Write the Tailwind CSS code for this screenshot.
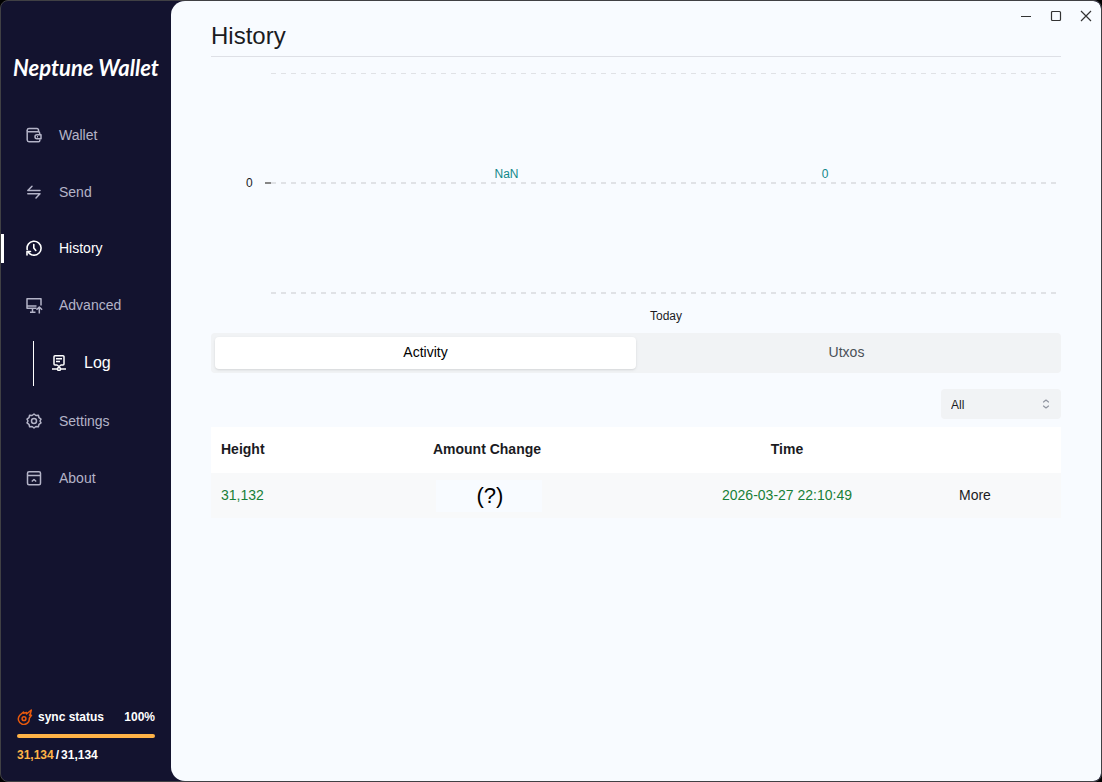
<!DOCTYPE html>
<html lang="en">

<head>
    <meta charset="UTF-8">
    <meta name="viewport" content="width=device-width, initial-scale=1.0">
    <title>Neptune Wallet</title>
    <script src="https://cdn.jsdelivr.net/npm/@tailwindcss/browser@4"></script>
</head>

<body class="bg-black font-['Liberation_Sans',Arial,sans-serif] text-sm text-[#1b1b1f]">
    <div class="flex min-h-screen overflow-hidden rounded-lg border border-[#404044] bg-[#13132f]">
        <!-- Sidebar -->
        <aside class="flex w-[170px] shrink-0 flex-col">
            <div class="h-[105px] pt-[51px] text-center font-['Lato','Open_Sans',sans-serif] text-[22px] leading-8 font-bold whitespace-nowrap text-white italic">Neptune Wallet</div>
            <nav class="flex flex-col text-[#b4b4c8]">
                <a href="#wallet" class="flex h-[57px] items-center gap-[17px] pl-[25px]">
                    <svg class="size-4" viewBox="0 0 16 16" fill="none" stroke="currentColor" stroke-width="1.500" stroke-linejoin="round">
                        <path d="M12.500 5V3a1.500 1.500 0 0 0-1.500-1.500H3A1.800 1.800 0 0 0 1.200 3v10A1.800 1.800 0 0 0 3 14.700h9.500a1.300 1.300 0 0 0 1.300-1.300V12.500" />
                        <path d="M1.200 3.500a1.500 1.500 0 0 0 1.500 1.300h9.500a1.500 1.500 0 0 1 1.500 1.500v1" />
                        <path d="M11 7.800h4v4h-4a2 2 0 0 1 0-4z" />
                        <path d="M11 9.800h1" />
                    </svg>
                    Wallet
                </a>
                <a href="#send" class="flex h-[57px] items-center gap-[17px] pl-[25px]">
                    <svg class="size-4" viewBox="0 0 16 16" fill="none" stroke="currentColor" stroke-width="1.500" stroke-linecap="round" stroke-linejoin="round">
                        <path d="M14 6.500H1.800L6 2.300" />
                        <path d="M1.800 9.800H14L10 14" />
                    </svg>
                    Send
                </a>
                <a href="#history" aria-current="page" class="flex h-14 items-center text-white">
                    <span class="h-[29px] w-[3px] bg-white"></span>
                    <svg class="mr-[17px] ml-[22px] size-4" viewBox="0 0 16 16" fill="none" stroke="currentColor" stroke-width="1.600" stroke-linecap="round" stroke-linejoin="round">
                        <path d="M1.200 9.500A7 7 0 1 1 8 15.200" />
                        <path d="M8 15.200a7 7 0 0 1-6-3.500" />
                        <path d="M1 15v-3.500h3.500" />
                        <path d="M7.800 4.500V8l2 2.500" />
                    </svg>
                    History
                </a>
                <a href="#advanced" class="flex h-[57px] items-center gap-[17px] pl-[25px]">
                    <svg class="size-4 overflow-visible" viewBox="0 0 16 16" fill="none" stroke="currentColor" stroke-width="1.500" stroke-linejoin="round">
                        <path d="M15 8.500V1.800H1v9.500h9.500" />
                        <path d="M1 9h9.500" />
                        <path d="M6.500 11.500V15M4 15.200h5.500" />
                        <path d="M13.300 16.500v-6M10.500 12.800l2.800-2.800 2.800 2.800" />
                    </svg>
                    Advanced
                </a>
                <div class="flex h-[60px] items-center pl-8">
                    <a href="#log" class="flex h-[45px] items-center gap-[17px] border-l border-white pl-[17px] text-base text-white">
                        <svg class="size-4" viewBox="0 0 16 16" fill="none" stroke="currentColor" stroke-width="1.500" stroke-linejoin="round">
                            <path d="M4 .800h8a1 1 0 0 1 1 1V9a1 1 0 0 1-1 1h-2L8 11.500 6 10H4a1 1 0 0 1-1-1V1.800a1 1 0 0 1 1-1z" />
                            <path d="M5 3.800h6M5 6.500h4" />
                            <circle cx="8" cy="14" r="1.500" />
                            <path d="M1 14h5.500M9.500 14H15" />
                        </svg>
                        Log
                    </a>
                </div>
                <a href="#settings" class="flex h-14 items-center gap-[17px] pl-[25px]">
                    <svg class="size-4" viewBox="0 0 16 16" fill="none" stroke="currentColor" stroke-width="1.500" stroke-linejoin="round">
                        <path d="M8 1l1.900 1.500 2.500-.300.600 2.500L15 6.200 14 8l1 1.900-2 1.400-.600 2.500-2.500-.300L8 15l-1.900-1.500-2.500.300L3 11.300 1 9.900 2 8 1 6.200l2-1.500.600-2.500 2.500.300z" />
                        <circle cx="8" cy="8" r="2.500" />
                    </svg>
                    Settings
                </a>
                <a href="#about" class="flex h-[57px] items-center gap-[17px] pl-[25px]">
                    <svg class="size-4" viewBox="0 0 16 16" fill="none" stroke="currentColor" stroke-width="1.500" stroke-linejoin="round">
                        <rect x="1.500" y="1.800" width="13" height="13" rx="1.500" />
                        <path d="M1.500 5.500h13" />
                        <path d="M5.800 11.500L8 9.500l2.200 2" />
                    </svg>
                    About
                </a>
            </nav>
            <div class="mt-auto px-4 pb-[18px] text-xs leading-4 font-bold text-white">
                <div class="flex items-center">
                    <svg class="mr-[5px] size-4" viewBox="0 0 16 16" fill="none" stroke="#e8590c" stroke-width="1.500" stroke-linecap="round" stroke-linejoin="round">
                        <path d="M9.500 3.500v1.500l4.800-4-1 4-.800 1.200h2l-2.200 3a5.500 5.500 0 1 1-9.500-3L6.500 3v1.300z" />
                        <circle cx="7" cy="9.700" r="1.900" />
                    </svg>
                    <span>sync status</span>
                    <span class="ml-auto">100%</span>
                </div>
                <div class="mt-[9px] h-1 rounded-full bg-[#ffb347]"></div>
                <div class="mt-[9px] flex gap-[2px]"><span class="text-[#ffb347]">31,134</span><span>/</span><span>31,134</span></div>
            </div>
        </aside>

        <!-- Content -->
        <main class="relative min-w-0 flex-1 rounded-l-[14px] rounded-r-lg bg-[#f8fbff] px-10">
            <div class="absolute top-0 right-0 flex text-[#333]">
                <button type="button" aria-label="Minimize" class="flex h-[30px] w-[30px] items-center justify-center">
                    <svg class="size-3" viewBox="0 0 12 12" fill="none" stroke="currentColor"><path d="M1 6.500h10" /></svg>
                </button>
                <button type="button" aria-label="Maximize" class="flex h-[30px] w-[30px] items-center justify-center">
                    <svg class="size-3" viewBox="0 0 12 12" fill="none" stroke="currentColor" stroke-width="1.200"><rect x="1.500" y="1.500" width="9" height="9" rx="1" /></svg>
                </button>
                <button type="button" aria-label="Close" class="flex h-[30px] w-[30px] items-center justify-center">
                    <svg class="size-3" viewBox="0 0 12 12" fill="none" stroke="currentColor" stroke-width="1.200"><path d="M1 1l10 10M11 1L1 11" /></svg>
                </button>
            </div>

            <header class="flex h-14 items-end border-b border-[#dee0e6] pb-1">
                <h1 class="text-2xl leading-8">History</h1>
            </header>

            <!-- Chart -->
            <section aria-label="Balance chart" class="text-xs leading-4">
                <div class="relative mt-4 mr-[5px] ml-[60px] flex h-[221px] flex-col justify-between">
                    <div class="h-px bg-[repeating-linear-gradient(90deg,#e0e2e6_0_5px,transparent_5px_10px)]"></div>
                    <div class="h-[2px] bg-[repeating-linear-gradient(90deg,#e0e2e6_0_5px,transparent_5px_10px)]"></div>
                    <div class="h-[2px] bg-[repeating-linear-gradient(90deg,#e0e2e6_0_5px,transparent_5px_10px)]"></div>
                    <span class="absolute top-[109px] -left-[6px] h-[2px] w-[6px] bg-[#868686]"></span>
                    <span class="absolute top-[102px] -left-[25px]">0</span>
                    <span class="absolute top-[93px] left-[30%] -translate-x-1/2 text-[#12888a]">NaN</span>
                    <span class="absolute top-[93px] left-[70.6%] -translate-x-1/2 text-[#12888a]">0</span>
                </div>
                <div class="ml-[60px] h-[39px] pt-[14px] text-center">Today</div>
            </section>

            <div role="tablist" class="grid h-10 grid-cols-2 rounded bg-[#f1f3f5] p-1">
                <button type="button" role="tab" aria-selected="true" class="rounded bg-white pb-[2px] text-black shadow-sm">Activity</button>
                <button type="button" role="tab" aria-selected="false" class="rounded pb-[2px] text-[#495057]">Utxos</button>
            </div>

            <div class="mt-4 flex justify-end">
                <div class="relative w-[120px]">
                    <select aria-label="Filter" class="h-[30px] w-full appearance-none rounded bg-[#f1f3f5] px-[10px] pt-px text-xs">
                        <option>All</option>
                    </select>
                    <svg class="pointer-events-none absolute top-[10px] right-[10px] size-[10px]" viewBox="0 0 10 10" fill="none" stroke="#9095a0" stroke-width="1.200" stroke-linecap="round" stroke-linejoin="round">
                        <path d="M2.500 3L5 1 7.500 3M2.500 7L5 9 7.500 7" />
                    </svg>
                </div>
            </div>

            <table class="mt-2 w-full table-fixed">
                <colgroup>
                    <col class="w-[138px]">
                    <col class="w-[276px]">
                    <col class="w-[324px]">
                    <col class="w-[112px]">
                </colgroup>
                <thead>
                    <tr class="h-[46px] bg-white">
                        <th class="px-[10px] pb-[2px] text-left">Height</th>
                        <th class="pb-[2px]">Amount Change</th>
                        <th class="pb-[2px]">Time</th>
                        <th></th>
                    </tr>
                </thead>
                <tbody>
                    <tr class="h-[45px] bg-[#f8f9fa]">
                        <td class="px-[10px] pb-[2px] text-[#188038]">31,132</td>
                        <td class="pl-[3px] text-center"><span class="inline-block w-[106px] bg-[#f8fbff] pl-[3px] align-middle text-[22px] leading-8 text-black">(?)</span></td>
                        <td class="pb-[2px] text-center text-[#188038]">2026-03-27 22:10:49</td>
                        <td class="px-[10px] pb-[2px]"><button type="button">More</button></td>
                    </tr>
                </tbody>
            </table>
        </main>
    </div>
</body>

</html>
